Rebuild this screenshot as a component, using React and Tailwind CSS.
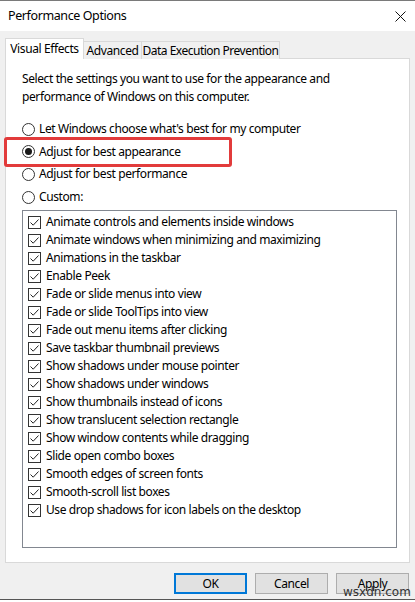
import React from 'react';

const items = [
  'Animate controls and elements inside windows',
  'Animate windows when minimizing and maximizing',
  'Animations in the taskbar',
  'Enable Peek',
  'Fade or slide menus into view',
  'Fade or slide ToolTips into view',
  'Fade out menu items after clicking',
  'Save taskbar thumbnail previews',
  'Show shadows under mouse pointer',
  'Show shadows under windows',
  'Show thumbnails instead of icons',
  'Show translucent selection rectangle',
  'Show window contents while dragging',
  'Slide open combo boxes',
  'Smooth edges of screen fonts',
  'Smooth-scroll list boxes',
  'Use drop shadows for icon labels on the desktop',
];

const radios = [
  { label: "Let Windows choose what's best for my computer", on: false },
  { label: 'Adjust for best appearance', on: true },
  { label: 'Adjust for best performance', on: false },
  { label: 'Custom:', on: false },
];

const Radio = ({ on }) => (
  <span className="w-[13px] h-[13px] rounded-full border border-[#333] bg-white flex items-center justify-center shrink-0">
    {on && <span className="w-[7px] h-[7px] rounded-full bg-[#1a1a1a]" />}
  </span>
);

const Check = () => (
  <span className="w-[13px] h-[13px] border border-[#333] bg-white flex items-center justify-center shrink-0">
    <svg width="11" height="11" viewBox="0 0 11 11">
      <path d="M1.5 5.5 L4.2 8.2 L9.5 2.5" fill="none" stroke="#222" strokeWidth="1" />
    </svg>
  </span>
);

const Btn = ({ children, primary }) => (
  <button
    className={
      primary
        ? 'w-[73px] h-[21px] bg-[#e1e1e1] border-2 border-[#0078d7] text-[12px] text-black leading-none'
        : 'w-[73px] h-[21px] bg-[#e1e1e1] border border-[#adadad] text-[12px] text-black leading-none'
    }
  >
    {children}
  </button>
);

export default function App() {
  return (
    <div className="w-[415px] h-[602px] bg-[#f0f0f0] relative overflow-hidden text-[12px] tracking-[-0.4px] text-black font-['Noto_Sans',sans-serif]">
      <div className="border-t border-[#7a7a7a] bg-white h-[31px] flex items-center justify-between pl-[8px] pr-[9px]">
        <span className="text-[12.5px]">Performance Options</span>
        <svg width="11" height="11" viewBox="0 0 11 11">
          <path d="M0.5 0.5 L10.5 10.5 M10.5 0.5 L0.5 10.5" stroke="#111" strokeWidth="1" />
        </svg>
      </div>

      <div className="px-[5px] pt-[7px]">
        <div className="flex items-end h-[21px] relative z-10 whitespace-nowrap">
          <div className="w-[79px] h-[21px] bg-white border border-b-0 border-[#d9d9d9] flex items-center justify-center">
            Visual Effects
          </div>
          <div className="w-[58px] h-[18px] bg-[#f0f0f0] border border-l-0 border-b-0 border-[#d9d9d9] flex items-center justify-center">
            Advanced
          </div>
          <div className="w-[138px] h-[18px] bg-[#f0f0f0] border border-l-0 border-b-0 border-[#d9d9d9] flex items-center justify-center tracking-[-0.5px]">
            Data Execution Prevention
          </div>
        </div>

        <div className="bg-white border border-[#d9d9d9] h-[505px] -mt-px pl-[16px] pr-[12px] pt-[11px]">
          <p className="leading-[18px]">
            Select the settings you want to use for the appearance and
            <br />
            performance of Windows on this computer.
          </p>

          <div className="mt-[12px] flex flex-col">
            {radios.map((r) => (
              <div key={r.label} className="h-[22.6px] flex items-center gap-[4px]">
                <Radio on={r.on} />
                <span>{r.label}</span>
              </div>
            ))}
          </div>

          <div className="mt-[2px] border border-[#828790] h-[338px] pl-[5px] pt-[2px]">
            {items.map((t) => (
              <div key={t} className="h-[18px] flex items-center gap-[5px]">
                <Check />
                <span>{t}</span>
              </div>
            ))}
          </div>
        </div>
      </div>

      <div className="flex justify-end gap-[8px] pr-[6px] mt-[10px]">
        <Btn primary>OK</Btn>
        <Btn>Cancel</Btn>
        <Btn>Apply</Btn>
      </div>

      <div className="absolute left-[4px] top-[137px] w-[228px] h-[30px] border-[3px] border-[#e23b3b] rounded-[3px]" />

      <span className="absolute left-[343px] top-[586px] text-[12px] leading-none tracking-normal text-[#333] font-['DejaVu_Sans',sans-serif]">wsxdn.com</span>

      <div className="absolute left-0 right-0 top-[599px] h-[3px] bg-white border-t border-[#555]" />
    </div>
  );
}
